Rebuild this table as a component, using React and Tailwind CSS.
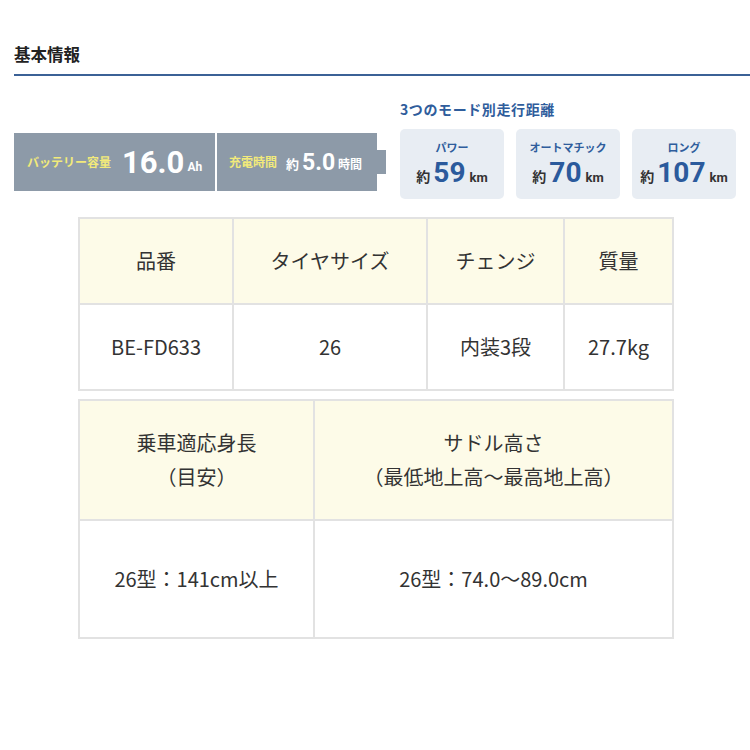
export default function App() {
  const jp = { fontFamily: '"Noto Sans CJK JP", "Noto Sans", sans-serif' };
  const cards = [
    { label: "パワー", value: "59" },
    { label: "オートマチック", value: "70" },
    { label: "ロング", value: "107" },
  ];
  const cell = "border-2 border-[#e2e2e2] text-center align-middle text-[20px] text-[#333]";
  return (
    <div className="w-[750px] h-[750px] bg-white" style={jp}>
      <div className="pt-[42px] pl-[14px]">
        <h2 className="text-[16.5px] font-bold text-[#222] leading-[24px]">基本情報</h2>
        <div className="mt-[8px] h-[2px] bg-[#3b6196]" />
      </div>

      <div className="flex items-end pl-[14px] mt-[23px]">
        <div className="flex items-center mb-[8px]">
          <div className="flex h-[58px] bg-[#8d9aa8]">
            <div className="flex items-center w-[201px] pl-[13px]">
              <span className="text-[12px] font-bold text-[#f2ea7a]">バッテリー容量</span>
              <span className="ml-[11px] text-[31px] font-bold text-white leading-none" style={{ fontFamily: "Roboto, sans-serif" }}>16.0</span>
              <span className="ml-[3px] mt-[10px] text-[12px] font-bold text-white" style={{ fontFamily: "Roboto, sans-serif" }}>Ah</span>
            </div>
            <div className="w-[2px] bg-white" />
            <div className="flex items-center w-[160px] pl-[12px]">
              <span className="text-[12px] font-bold text-[#f2ea7a]">充電時間</span>
              <span className="ml-[9px] mt-[3px] text-[13px] font-bold text-white">約</span>
              <span className="ml-[3px] text-[23px] font-bold text-white leading-none" style={{ fontFamily: "Roboto, sans-serif" }}>5.0</span>
              <span className="ml-[3px] mt-[4px] text-[12px] font-bold text-white">時間</span>
            </div>
          </div>
          <div className="w-[9px] h-[24px] bg-[#8d9aa8]" />
        </div>

        <div className="ml-[14px]">
          <div className="text-[14px] tracking-[0.6px] font-bold text-[#2f5d9c] leading-[20px] mb-[10px]">3つのモード別走行距離</div>
          <div className="flex gap-[12px]">
            {cards.map((c) => (
              <div key={c.label} className="w-[104px] h-[70px] rounded-[5px] bg-[#e8edf3] flex flex-col items-center pt-[11px]">
                <div className="text-[11px] font-bold text-[#2f5d9c] leading-[14px]">{c.label}</div>
                <div className="flex items-baseline mt-[2px]">
                  <span className="text-[14px] font-bold text-[#333]">約</span>
                  <span className="ml-[3px] text-[28px] font-bold text-[#2b5a9c] leading-[34px]" style={{ fontFamily: "Roboto, sans-serif" }}>{c.value}</span>
                  <span className="ml-[4px] text-[13px] font-bold text-[#333]" style={{ fontFamily: "Roboto, sans-serif" }}>km</span>
                </div>
              </div>
            ))}
          </div>
        </div>
      </div>

      <table className="ml-[78px] mt-[18px] w-[594px] border-collapse table-fixed">
        <colgroup>
          <col className="w-[154px]" />
          <col className="w-[194px]" />
          <col className="w-[137px]" />
          <col className="w-[109px]" />
        </colgroup>
        <tbody>
          <tr className="h-[86px] bg-[#fdfbe8]">
            <td className={cell}>品番</td>
            <td className={cell}>タイヤサイズ</td>
            <td className={cell}>チェンジ</td>
            <td className={cell}>質量</td>
          </tr>
          <tr className="h-[86px]">
            <td className={cell}>BE-FD633</td>
            <td className={cell}>26</td>
            <td className={cell}>内装3段</td>
            <td className={cell}>27.7kg</td>
          </tr>
        </tbody>
      </table>

      <table className="ml-[78px] mt-[8px] w-[594px] border-collapse table-fixed">
        <colgroup>
          <col className="w-[235px]" />
          <col className="w-[359px]" />
        </colgroup>
        <tbody>
          <tr className="h-[120px] bg-[#fdfbe8]">
            <td className={cell + " leading-[34px]"}>乗車適応身長<br />（目安）</td>
            <td className={cell + " leading-[34px]"}>サドル高さ<br />（最低地上高〜最高地上高）</td>
          </tr>
          <tr className="h-[118px]">
            <td className={cell}>26型：141cm以上</td>
            <td className={cell}>26型：74.0〜89.0cm</td>
          </tr>
        </tbody>
      </table>
    </div>
  );
}
